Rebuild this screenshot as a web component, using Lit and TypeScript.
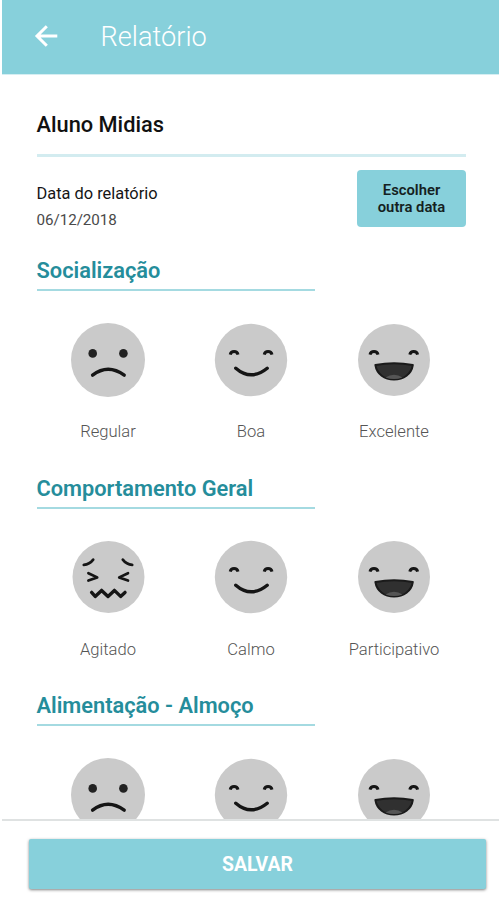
import { LitElement, html, css, svg, nothing } from "lit";
import { customElement, property } from "lit/decorators.js";

type Mood = "sad" | "happy" | "laugh" | "upset";

const features = {
  sad: svg`
    <circle class="disc" r="37" />
    <circle class="eye" cx="-15.3" cy="-6.6" r="4.3" />
    <circle class="eye" cx="15.4" cy="-6.6" r="4.3" />
    <path class="line" d="M-15.4 15.2Q0 3.4 16.2 15.2" />`,
  happy: svg`
    <circle class="disc" r="36.2" />
    <path class="lid" d="M-20.8 -5.4C-19.8 -9.4 -14 -9.4 -13 -5.4M13.2 -5.4C14.2 -9.4 20 -9.4 21 -5.4" />
    <path class="line" d="M-15.2 8.2Q0 21.4 16.2 8.2" />`,
  laugh: svg`
    <circle class="disc" r="36" />
    <path class="lid" d="M-24 -5.4C-23 -9.4 -17 -9.4 -16 -5.4M15.8 -5.4C16.8 -9.4 22.6 -9.4 23.6 -5.4" />
    <path class="mouth" d="M-18.6 5Q0 1.6 18.8 5C17.5 14 9.5 19.6 0 19.6S-17.2 14 -18.6 5Z" />
    <path class="tongue" d="M-8.5 17.4Q0 12 8.5 17.4Q0 20.8 -8.5 17.4Z" />`,
  upset: svg`
    <circle class="disc" cx=".5" r="36" />
    <path class="thin" d="M-24.2 -12.2Q-18.4 -12.6 -14.8 -17.4M14.8 -17.4Q18.4 -12.6 24.2 -12.2" />
    <path class="thin" d="M-19.6 -3.8L-10.8 .4L-19.6 3.6M20 -3.8L11.2 .4L20 3.6" />
    <path class="line" d="M-16.4 15.4L-12.8 19.4L-6.4 13.4L0 19.4L6.4 13.4L12.6 19.4L17 15.4" />`,
};

@customElement("mood-face")
class MoodFace extends LitElement {
  @property() mood: Mood = "happy";

  static styles = css`
    :host { display: block; width: 76px; height: 76px; }
    svg { display: block; }
    .disc { fill: #cacaca; }
    .eye { fill: #222; }
    .line, .lid, .thin { fill: none; stroke: #151515; stroke-width: 3.4; stroke-linecap: round; stroke-linejoin: round; }
    .lid { stroke-width: 3; stroke-linecap: butt; }
    .thin { stroke-width: 2.7; }
    .mouth { fill: #303030; stroke: #1a1a1a; stroke-width: 2; stroke-linejoin: round; }
    .tongue { fill: #555; }
  `;

  render() {
    return html`<svg width="76" height="76" viewBox="-38 -38 76 76">${features[this.mood]}</svg>`;
  }
}

@customElement("report-section")
class ReportSection extends LitElement {
  @property() heading = "";
  @property({ attribute: false }) options: [Mood, string?][] = [];

  static styles = css`
    :host { display: block; height: 217.5px; }
    h2 { margin: 0; height: 32px; line-height: 28px; font-size: 21.8px; font-weight: 600; color: #258d9b; white-space: nowrap; }
    .rule { width: 278px; height: 2px; background: #a4dae1; }
    .options { display: grid; grid-template-columns: repeat(3, 143px); padding-top: 30.5px; }
    .option { display: flex; flex-direction: column; align-items: center; gap: 24.5px; }
    .label { font-size: 16.6px; line-height: 20px; font-weight: 300; color: #555; white-space: nowrap; }
  `;

  render() {
    return html`
      <h2>${this.heading}</h2>
      <div class="rule"></div>
      <div class="options">
        ${this.options.map(
          ([mood, label]) => html`<div class="option">
            <mood-face .mood=${mood}></mood-face>
            ${label ? html`<span class="label">${label}</span>` : nothing}
          </div>`
        )}
      </div>
    `;
  }
}

@customElement("app-root")
class AppRoot extends LitElement {
  static styles = css`
    :host {
      display: flex; flex-direction: column; height: 900px; box-sizing: border-box; padding-left: 2px;
      overflow: hidden; background: #fff; font-family: Roboto, "Liberation Sans", sans-serif;
    }
    header { flex: none; display: flex; align-items: center; height: 74px; padding-left: 32px; background: #87d0db; border-bottom: 1px solid #d5eef2; box-sizing: content-box; }
    .back { display: block; width: 24px; height: 24px; margin-top: -2px; }
    .title { margin: 0 0 0 42.5px; font-size: 27.2px; font-weight: 350; line-height: 36px; color: #fff; }
    main { flex: 1; min-height: 0; overflow: hidden; padding: 0 33px 0 34.5px; }
    .student { margin: 0; padding-top: 36px; height: 43px; line-height: 28px; font-size: 21.8px; font-weight: 500; color: #111; }
    .divider { height: 3px; background: #d3ecf0; }
    .date-row { display: flex; justify-content: space-between; align-items: flex-start; height: 100px; }
    .date { padding-top: 25px; font-size: 16.4px; line-height: 24px; color: #151515; }
    .value { font-size: 15.2px; line-height: 28px; color: #4a4a4a; font-weight: 400; letter-spacing: -.05px; }
    .pick { margin: 13px 0 0; padding: 0; width: 109px; height: 57px; border: 0; border-radius: 4px; background: #87d0db; font: 600 14.8px/16.5px Roboto, sans-serif; color: #151f22; }
    footer { flex: none; height: 81px; border-top: 2px solid #dfe2e2; box-sizing: border-box; padding: 18px 13px 0 27px; }
    .save { display: block; width: 100%; height: 50px; border: 0; border-radius: 2px; background: #87d0db; color: #fff; font: 700 19.4px/50px Roboto, sans-serif; padding: 1px 0 0; box-shadow: 0 1px 3px rgba(0, 0, 0, .5); }
  `;

  render() {
    return html`
      <header>
        <svg class="back" viewBox="0 0 24 24" fill="none" stroke="#fff" stroke-width="3"><path d="M23.3 12H3M12.8 2.2L3 12L12.8 21.8" /></svg>
        <h1 class="title">Relatório</h1>
      </header>
      <main>
        <h2 class="student">Aluno Midias</h2>
        <div class="divider"></div>
        <div class="date-row">
          <div class="date">Data do relatório<div class="value">06/12/2018</div></div>
          <button class="pick">Escolher<br />outra data</button>
        </div>
        <report-section heading="Socialização" .options=${[["sad", "Regular"], ["happy", "Boa"], ["laugh", "Excelente"]]}></report-section>
        <report-section heading="Comportamento Geral" .options=${[["upset", "Agitado"], ["happy", "Calmo"], ["laugh", "Participativo"]]}></report-section>
        <report-section heading="Alimentação - Almoço" .options=${[["sad"], ["happy"], ["laugh"]]}></report-section>
      </main>
      <footer><button class="save">SALVAR</button></footer>
    `;
  }
}
